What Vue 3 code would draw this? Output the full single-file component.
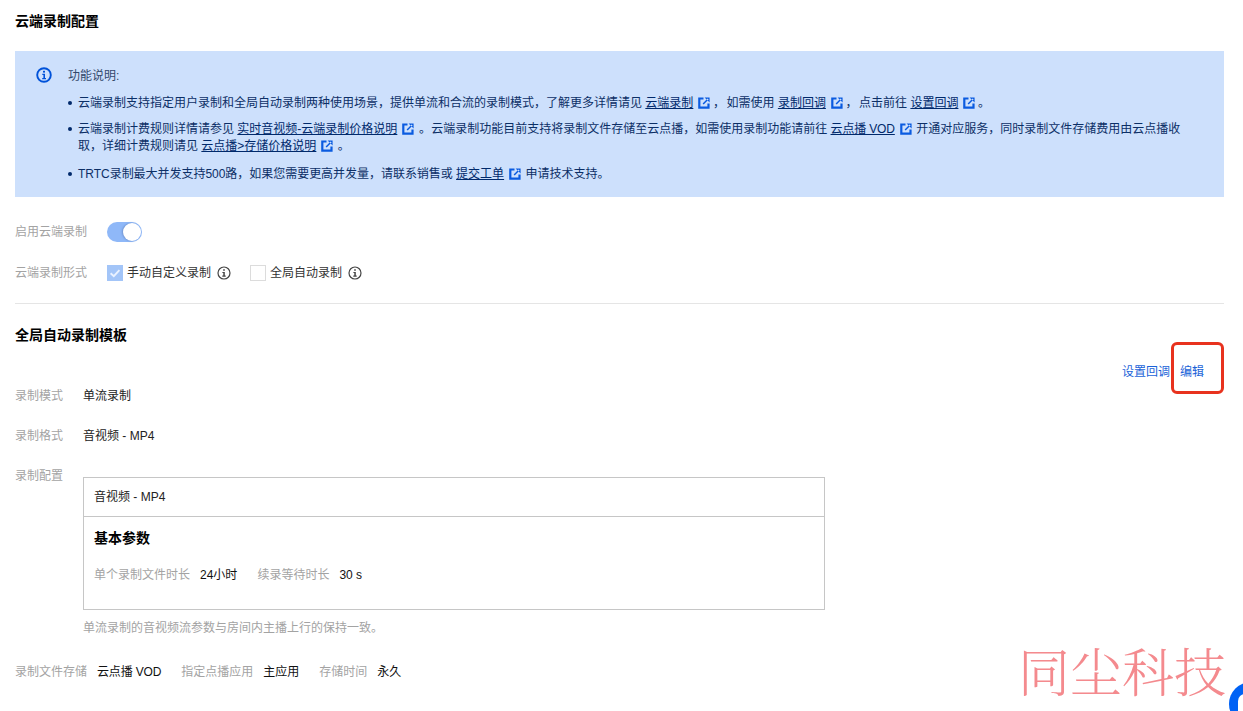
<script setup>
const paragraphs = [
  [
    { t: '云端录制支持指定用户录制和全局自动录制两种使用场景，提供单流和合流的录制模式，了解更多详情请见 ' },
    { l: '云端录制' }, { t: ' ，', c: 'tight' }, { t: ' 如需使用 ' }, { l: '录制回调' }, { t: ' ，', c: 'tight' }, { t: ' 点击前往 ' }, { l: '设置回调' }, { t: ' 。', c: 'tight' }
  ],
  [
    { t: '云端录制计费规则详情请参见 ' }, { l: '实时音视频-云端录制价格说明' },
    { t: ' 。', c: 'wide' }, { t: '云端录制功能目前支持将录制文件存储至云点播，如需使用录制功能请前往 ' }, { l: '云点播 VOD', c: 'narrow' },
    { t: ' 开通对应服务，同时录制文件存储费用由云点播收' }, { t: '取，详细计费规则请见 ' }, { l: '云点播>存储价格说明' }, { t: ' 。' }
  ],
  [
    { t: 'TRTC录制最大并发支持500路，如果您需要更高并发量，请联系销售或 ', c: 'hair' }, { l: '提交工单' }, { t: ' 申请技术支持。' }
  ]
]
</script>

<template>
  <div class="page">
    <h2 class="title">云端录制配置</h2>

    <section class="alert">
      <svg class="alert-icon" viewBox="0 0 16 16" width="16" height="16">
        <circle cx="8" cy="8" r="6.8" fill="none" stroke="#0052d9" stroke-width="1.9" />
        <rect x="7" y="3.8" width="2" height="1.8" fill="#0052d9" />
        <path d="M6.3 6.7h2.7v4.2h1v1.3H6.2v-1.3h1.2V8H6.3z" fill="#0052d9" />
      </svg>
      <div class="alert-body">
        <p class="alert-head">功能说明:</p>
        <ul class="alert-list">
          <li v-for="(p, i) in paragraphs" :key="i">
            <template v-for="(s, j) in p" :key="j">
              <span v-if="s.t" :class="s.c">{{ s.t }}</span>
              <template v-else>
                <a class="link" :class="s.c">{{ s.l }}</a>
                <svg class="ext" viewBox="0 0 12 12" width="12" height="12">
                  <path d="M5.5 1.5H1.3v9.2h9.2V6.5" fill="none" stroke="#0a5be0" stroke-width="2.2" />
                  <path d="M6.6 .5h5v5zM9.6 1.4 4.6 6.4 5.7 7.5 10.6 2.5z" fill="#0a5be0" />
                </svg>
              </template>
            </template>
          </li>
        </ul>
      </div>
    </section>

    <div class="form-row switch-row">
      <span class="form-label">启用云端录制</span>
      <span class="switch"><span class="knob"></span></span>
    </div>
    <div class="form-row type-row">
      <span class="form-label">云端录制形式</span>
      <span class="check checked">
        <svg viewBox="0 0 16 16" width="16" height="16"><path d="M3.6 8.2 6.8 11.2 12.4 5.2" fill="none" stroke="#eaf2ff" stroke-width="1.9" /></svg>
      </span>
      <span class="check-text">手动自定义录制</span>
      <svg class="tip" viewBox="0 0 14 14" width="14" height="14">
        <circle cx="7" cy="7" r="6" fill="none" stroke="#444" stroke-width="1.2" />
        <path d="M6.2 3.2h1.6v1.5H6.2zM5.4 6h2.4v3.6h.9v1.1H5.3V9.6h1V7.1h-.9z" fill="#444" />
      </svg>
      <span class="check second"></span>
      <span class="check-text">全局自动录制</span>
      <svg class="tip" viewBox="0 0 14 14" width="14" height="14">
        <circle cx="7" cy="7" r="6" fill="none" stroke="#444" stroke-width="1.2" />
        <path d="M6.2 3.2h1.6v1.5H6.2zM5.4 6h2.4v3.6h.9v1.1H5.3V9.6h1V7.1h-.9z" fill="#444" />
      </svg>
    </div>

    <hr class="divider" />

    <h2 class="title sub">全局自动录制模板</h2>

    <div class="actions">
      <a class="action">设置回调</a>
      <a class="action">编辑</a>
      <span class="highlight"></span>
    </div>

    <div class="info-row first">
      <span class="info-label">录制模式</span><span>单流录制</span>
    </div>
    <div class="info-row">
      <span class="info-label">录制格式</span><span>音视频 - MP4</span>
    </div>
    <div class="info-row config">
      <span class="info-label">录制配置</span>
      <div class="config-main">
        <div class="panel">
          <div class="panel-head">音视频 - MP4</div>
          <div class="panel-body">
            <h3 class="panel-title">基本参数</h3>
            <div class="params">
              <span class="muted">单个录制文件时长</span><span class="val gap">24小时</span>
              <span class="muted">续录等待时长</span><span class="val">30 s</span>
            </div>
          </div>
        </div>
        <p class="hint">单流录制的音视频流参数与房间内主播上行的保持一致。</p>
      </div>
    </div>
    <div class="storage">
      <span class="muted">录制文件存储</span><span class="val gap narrow">云点播 VOD</span>
      <span class="muted">指定点播应用</span><span class="val gap">主应用</span>
      <span class="muted">存储时间</span><span class="val">永久</span>
    </div>

    <div class="watermark">同尘科技</div>
    <div class="fab"><span class="fab-inner"></span></div>
  </div>
</template>

<style scoped>
.page {
  position: relative;
  width: 1243px;
  height: 711px;
  overflow: hidden;
  box-sizing: border-box;
  padding: 13px 19px 0 15px;
  background: #fff;
  color: #000;
  font: 12px/17px "Liberation Sans", "Noto Sans CJK SC", sans-serif;
}
.title { margin: 0; font-size: 14px; line-height: 17px; font-weight: 700; color: #000; }
.alert {
  display: flex;
  margin-top: 21px;
  height: 146px;
  box-sizing: border-box;
  padding: 15px 36px 0 21px;
  background: #cde0fc;
  color: #00296b;
}
.alert-icon { flex: none; margin: 1px 16px 0 0; }
.alert-body { flex: 1; padding-top: 2px; }
.alert-head { margin: 0; color: #33486b; }
.alert-list { margin: 10px 0 0; padding: 0 0 0 10px; list-style: none; }
.alert-list li { position: relative; margin-bottom: 9px; color: #0c2f66; }
.alert-list li:nth-child(2) { margin-bottom: 11px; }
.alert-list li::before {
  content: "";
  position: absolute;
  left: -10px;
  top: 6px;
  width: 4px;
  height: 4px;
  border-radius: 50%;
  background: #00296b;
}
.link { color: #00296b; text-decoration: underline; }
.tight { letter-spacing: -1.75px; }
.wide { letter-spacing: 0.25px; }
.narrow { letter-spacing: -0.15px; }
.hair { letter-spacing: -0.03px; }
.ext { vertical-align: -2px; margin: 0 1px 0 5px; }
.form-row { display: flex; align-items: center; }
.form-label { width: 92px; color: #a3a3a3; }
.switch-row { margin-top: 25px; height: 20px; }
.switch {
  display: block;
  position: relative;
  width: 35px;
  height: 20px;
  border-radius: 10px;
  background: #8fb8f8;
}
.knob {
  position: absolute;
  right: 1px;
  top: 1px;
  width: 18px;
  height: 18px;
  box-sizing: border-box;
  border-radius: 50%;
  background: #fff;
  box-shadow: -1px 0 2px #6f93d0;
}
.type-row { margin-top: 21px; height: 20px; }
.check {
  display: block;
  width: 16px;
  height: 16px;
  box-sizing: border-box;
  border: 1px solid #dcdcdc;
}
.check.checked { border: 0; background: #a3c5f8; }
.check.second { margin-left: 19px; }
.check-text { margin-left: 4px; color: #333; }
.tip { margin-left: 6px; }
.divider { margin: 20px 0 0; border: 0; border-top: 1px solid #e5e5e5; }
.title.sub { margin-top: 23px; }
.actions {
  position: relative;
  display: flex;
  justify-content: flex-end;
  gap: 10px;
  margin-top: 20px;
  padding-right: 20px;
  height: 17px;
}
.action { color: #1a63d8; }
.highlight {
  position: absolute;
  right: 0;
  top: -20px;
  margin-top: -2px;
  width: 53px;
  height: 52px;
  box-sizing: border-box;
  border: 3px solid #e8321e;
  border-radius: 6px;
}
.info-row { display: flex; margin-top: 23px; color: #222; }
.info-row.first { margin-top: 7px; }
.info-label { width: 68px; flex: none; color: #a3a3a3; }
.config { margin-top: 23px; }
.config-main { width: 742px; padding-top: 9px; }
.panel { border: 1px solid #c6c6c6; height: 133px; box-sizing: border-box; }
.panel-head { height: 39px; padding: 11px 10px 0; box-sizing: border-box; border-bottom: 1px solid #c6c6c6; color: #222; }
.panel-body { padding: 13px 10px 0; }
.panel-title { margin: 0; font-size: 14px; line-height: 17px; font-weight: 700; color: #000; }
.params { margin-top: 20px; }
.muted { color: #a3a3a3; }
.val { margin-left: 10px; color: #111; }
.gap { margin-right: 20px; }
.hint { margin: 10px 0 0; color: #a3a3a3; }
.storage { margin-top: 27px; }
.watermark {
  position: absolute;
  left: 1018px;
  top: 640px;
  font-family: "Noto Serif CJK SC", "Noto Sans CJK SC", serif;
  font-size: 52px;
  line-height: 60px;
  font-weight: 300;
  color: #f48a8e;
}
.fab {
  position: absolute;
  left: 1229px;
  top: 682px;
  width: 44px;
  height: 44px;
  border-radius: 50%;
  background: #0062f5;
}
.fab-inner {
  position: absolute;
  left: 9px;
  top: 12px;
  width: 14px;
  height: 20px;
  border-radius: 7px 7px 0 0;
  background: #fff;
}
</style>
